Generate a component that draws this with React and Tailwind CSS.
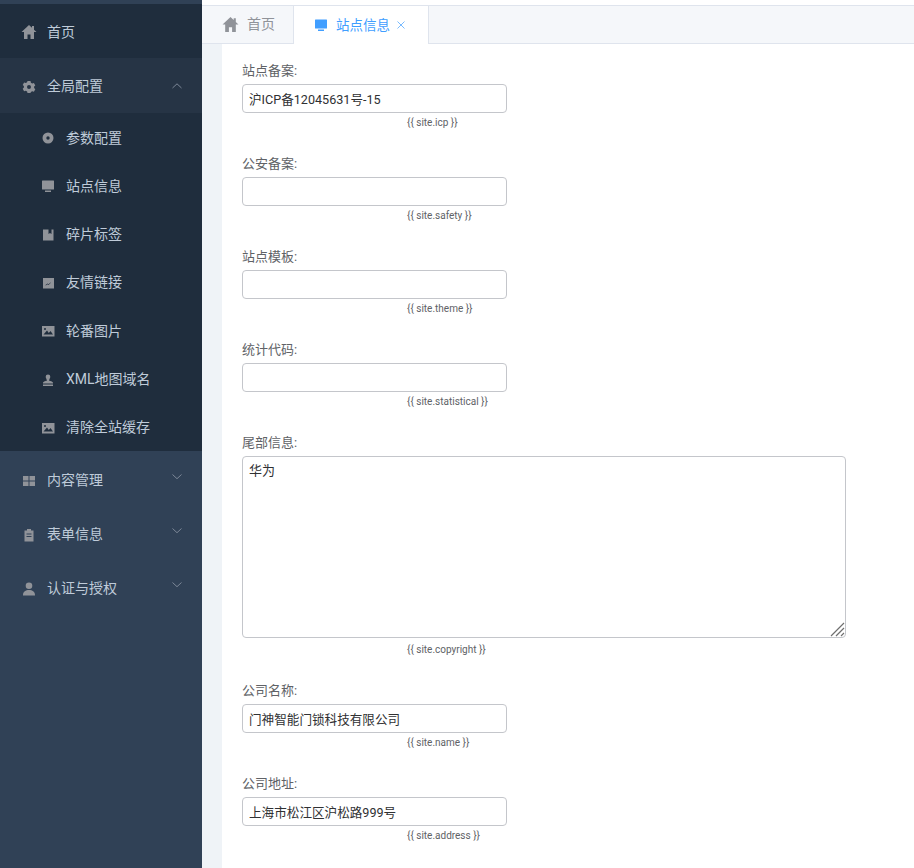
import React from "react";

const I = ({ children, s = 16, c = "" }) => (
  <svg width={s} height={s} viewBox="0 0 16 16" fill="currentColor" className={"shrink-0 " + c}>{children}</svg>
);
const Home = (p) => <I {...p}><path d="M8 1 .5 8H3v7h3.500v-4.500h3V15H13V8h2.500L13 5.700V2h-2v1.800z" /></I>;
const Gear = (p) => <I {...p}><path fillRule="evenodd" d="M6.500 2h3l.4 1.700 1.300.7 1.700-.5 1.400 2.500-1.200 1.200v1.400l1.200 1.200-1.400 2.500-1.700-.5-1.300.7L9.500 14h-3l-.4-1.600-1.300-.7-1.700.5-1.400-2.500 1.200-1.200V7.100L1.700 5.900l1.400-2.500 1.700.5 1.300-.7zM8 6a2 2 0 1 0 0 4 2 2 0 0 0 0-4z" /></I>;
const Disc = (p) => <I {...p}><path fillRule="evenodd" d="M8 2.500a5.500 5.500 0 1 1 0 11 5.500 5.500 0 0 1 0-11zM8 6.300a1.700 1.700 0 1 0 0 3.400 1.700 1.700 0 0 0 0-3.400z" /></I>;
const Monitor = (p) => <I {...p}><path d="M2.500 2.500h11a.5.500 0 0 1 .5.500v8a.5.500 0 0 1-.5.500h-11A.5.500 0 0 1 2 11V3a.5.500 0 0 1 .5-.5zM5 12.500h6V14H5z" /></I>;
const Book = (p) => <I {...p}><path fillRule="evenodd" d="M3 2.500h10.500v11H3zM8.500 2.500v4.500l1.500-1 1.500 1V2.500z" /></I>;
const Chart = (p) => <I {...p}><path fillRule="evenodd" d="M3 3h11v10.500H3zM5.500 10l2-1.500 1 .8 2-1.800.3.300-2.300 2.200-1-.8-1.700 1.200z" /></I>;
const Pic = (p) => <I {...p}><path fillRule="evenodd" d="M2 3h12.500v10.500H2zM3.500 11.500h9.500L10.500 8 8.800 10 7 7.500zM5 5a1 1 0 1 0 0 2 1 1 0 0 0 0-2z" /></I>;
const Stamp = (p) => <I {...p}><path d="M8 2.500a2.300 2.300 0 0 1 2.300 2.300c0 1.300-1.100 2.200-1.100 3.700 0 .8 3.800.5 3.800 2.500v.5H3v-.5c0-2 3.800-1.700 3.800-2.500 0-1.500-1.100-2.400-1.100-3.700A2.300 2.300 0 0 1 8 2.500zM3 12.500h10V14H3z" /></I>;
const Grid = (p) => <I {...p}><path d="M2 3h5.500v4.500H2zM8.500 3H14v4.500H8.500zM2 8.500h5.500V13H2zM8.500 8.500H14V13H8.500z" /></I>;
const Clip = (p) => <I {...p}><path fillRule="evenodd" d="M6 2h4v1.500h2.500V14.500h-9V3.500H6zM5.500 6.500v1h5v-1zM5.500 9v1h5V9z" /></I>;
const User = (p) => <I {...p}><path d="M8 1.500a3.300 3.300 0 1 1 0 6.600 3.300 3.300 0 0 1 0-6.600zM2 14c0-3.200 2.700-5 6-5s6 1.800 6 5v.5H2z" /></I>;

const Chevron = ({ up }) => (
  <svg width="12" height="12" viewBox="0 0 12 12" fill="none" stroke="currentColor" strokeWidth="1" className="text-[#7c8797] shrink-0">
    <path d={up ? "M1.500 8 6 3.800 10.500 8" : "M1.500 3.500 6 7.700 10.500 3.500"} />
  </svg>
);

const Top = ({ icon: Ic, label, bg = "", chevron, up, h = "h-[54px]" }) => (
  <div className={h + " flex items-center pt-[2px] pl-[21px] pr-[19px] text-[14px] text-[#bfcbd9] " + bg}>
    <span className="text-[#909399] w-[16px] flex justify-center"><Ic s={16} /></span>
    <span className="ml-[10px] flex-1">{label}</span>
    {chevron && <span className={up ? "-mt-[2px]" : "-mt-[7px]"}><Chevron up={up} /></span>}
  </div>
);

const Sub = ({ icon: Ic, label }) => (
  <div className="h-[48.286px] flex items-center pt-[2px] pl-[40px] text-[14px] text-[#bfcbd9]">
    <span className="text-[#909399] w-[16px] flex justify-center"><Ic s={16} /></span>
    <span className="ml-[10px]">{label}</span>
  </div>
);

const labelCls = "h-[26px] flex items-end pb-[3px] text-[13px] leading-[20px] text-[#606266]";
const hintCls = "pl-[165px] text-[10px] leading-[14px] text-[#606266]";

const Field = ({ label, value, hint }) => (
  <div className="h-[93px]">
    <div className={labelCls}>{label}:</div>
    <input readOnly defaultValue={value} className="block w-[265px] h-[29px] px-[6px] text-[12.6px] text-[#303133] bg-white border border-[#c4c6cb] rounded-[4px] outline-none" />
    <div className={hintCls + " mt-[3px]"}>{hint}</div>
  </div>
);

export default function App() {
  return (
    <div className="flex w-[914px] h-[868px] overflow-hidden bg-white" style={{ fontFamily: 'Roboto,"Noto Sans CJK SC",sans-serif' }}>
      <aside className="w-[202px] shrink-0 bg-[#304156] pt-[4px]">
        <Top icon={Home} label="首页" bg="bg-[#1f2d3d]" />
        <Top icon={Gear} label="全局配置" bg="bg-[#263445]" chevron up h="h-[55px]" />
        <div className="bg-[#1f2d3d]">
          <Sub icon={Disc} label="参数配置" />
          <Sub icon={Monitor} label="站点信息" />
          <Sub icon={Book} label="碎片标签" />
          <Sub icon={Chart} label="友情链接" />
          <Sub icon={Pic} label="轮番图片" />
          <Sub icon={Stamp} label="XML地图域名" />
          <Sub icon={Pic} label="清除全站缓存" />
        </div>
        <div className="mt-[2px]">
          <Top icon={Grid} label="内容管理" chevron />
          <Top icon={Clip} label="表单信息" chevron />
          <Top icon={User} label="认证与授权" chevron />
        </div>
      </aside>
      <main className="flex-1 flex flex-col pt-[5px] min-w-0">
        <div className="h-[39px] shrink-0 flex bg-[#f5f7fa] border-t border-b border-[#dfe4ed]">
          <div className="w-[91px] flex items-center pl-[20px] text-[14px] text-[#909399]">
            <Home s={17} />
            <span className="ml-[8px]">首页</span>
          </div>
          <div className="w-[136px] -mb-px flex items-center pl-[19px] text-[13.5px] text-[#409eff] bg-white border-l border-r border-[#dfe4ed]">
            <Monitor s={16} />
            <span className="ml-[7px]">站点信息</span>
            <svg width="10" height="10" viewBox="0 0 10 10" stroke="currentColor" fill="none" className="ml-[6px] text-[#79bbff]"><path d="M1.500 1.500 8.500 8.500M8.500 1.500 1.500 8.500" /></svg>
          </div>
        </div>
        <div className="flex-1 flex bg-[#eff3f7] pl-[20px] min-h-0">
          <div className="flex-1 bg-white pl-[20px] pt-[14px] overflow-hidden">
            <Field label="站点备案" value="沪ICP备12045631号-15" hint="{{ site.icp }}" />
            <Field label="公安备案" value="" hint="{{ site.safety }}" />
            <Field label="站点模板" value="" hint="{{ site.theme }}" />
            <Field label="统计代码" value="" hint="{{ site.statistical }}" />
            <div className="h-[248px]">
              <div className={labelCls}>尾部信息:</div>
              <div className="relative w-[604px] h-[182px]">
                <textarea readOnly defaultValue="华为" className="block w-full h-full resize-none px-[6px] py-[4px] text-[13px] leading-[20px] text-[#303133] bg-white border border-[#c4c6cb] rounded-[4px] outline-none" />
                <svg width="15" height="15" viewBox="0 0 15 15" fill="none" stroke="#6f6f6f" strokeWidth="1.2" className="absolute right-[1px] bottom-[1px]">
                  <path d="M1 14 14 1M6 14 14 6M11 14 14 11" />
                </svg>
              </div>
              <div className={hintCls + " mt-[5px]"}>{"{{ site.copyright }}"}</div>
            </div>
            <Field label="公司名称" value="门神智能门锁科技有限公司" hint="{{ site.name }}" />
            <Field label="公司地址" value="上海市松江区沪松路999号" hint="{{ site.address }}" />
          </div>
        </div>
      </main>
    </div>
  );
}
